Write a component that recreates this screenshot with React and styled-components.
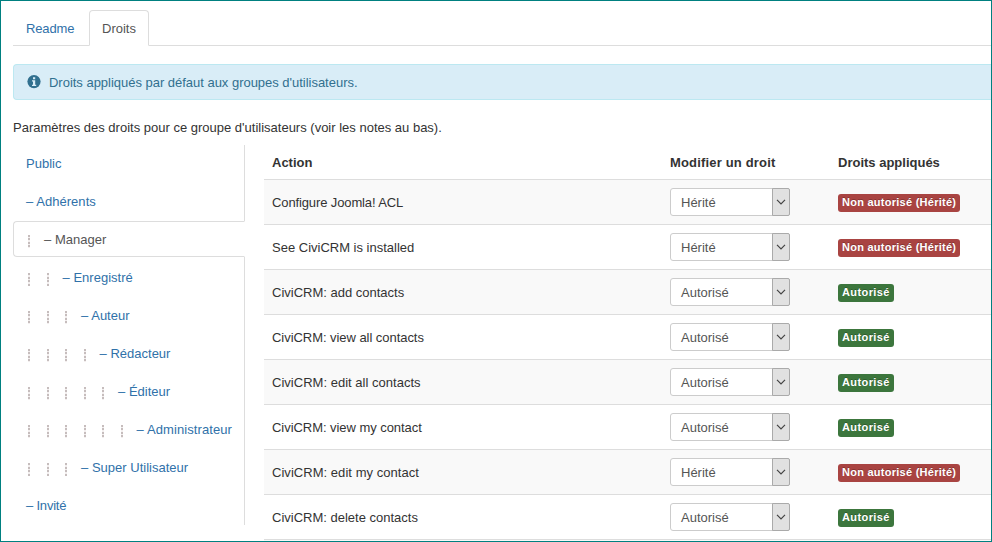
import React from "react";
import styled, { createGlobalStyle } from "styled-components";

const GlobalStyle = createGlobalStyle`
  * { box-sizing: border-box; }
  body {
    margin: 0;
    background: #fff;
    color: #333;
    font: 13px/18px "Liberation Sans", Arial, sans-serif;
  }
`;

const Page = styled.main`
  height: 542px;
  padding: 9px 0 0 12px;
  border: 1px solid #008080;
  overflow: hidden;
`;

const TabBar = styled.nav`
  display: flex;
  height: 36px;
  border-bottom: 1px solid #ddd;
`;

const Tab = styled.a`
  height: 36px;
  width: ${(p) => p.$width}px;
  padding: 9px 0 8px 12px;
  margin-right: 2px;
  border: 1px solid ${(p) => (p.$active ? "#ddd" : "transparent")};
  border-bottom-color: ${(p) => (p.$active ? "#fff" : "#ddd")};
  border-radius: 4px 4px 0 0;
  background: ${(p) => (p.$active ? "#fff" : "transparent")};
  color: ${(p) => (p.$active ? "#555" : "#3071a9")};
  letter-spacing: ${(p) => p.$spacing || 0}px;
  white-space: nowrap;
`;

const Notice = styled.div`
  display: flex;
  align-items: center;
  gap: 8px;
  height: 36px;
  margin-top: 18px;
  padding-left: 13px;
  border: 1px solid #bce8f1;
  border-right: 0;
  border-radius: 4px 0 0 4px;
  background: #d9edf7;
  color: #31708f;
`;

const Line = styled.span`
  padding-top: ${(p) => p.$drop || 0}px;
  letter-spacing: ${(p) => p.$spacing || 0}px;
  white-space: nowrap;
`;

const Intro = styled.p`
  margin: 19px 0 8px;
`;

const Columns = styled.div`
  display: flex;
  gap: 19px;
`;

const GroupList = styled.ul`
  display: flex;
  flex-direction: column;
  gap: 2px;
  flex: none;
  width: 232px;
  height: 380px;
  margin: 0;
  padding: 0;
  list-style: none;
  border-right: 1px solid #ddd;
`;

const Group = styled.li`
  display: flex;
  flex: none;
  height: 36px;
  margin-right: -1px;
  padding: 9px 0 0 12px;
  border: 1px solid ${(p) => (p.$active ? "#ddd" : "transparent")};
  border-right-color: ${(p) => (p.$active ? "#fff" : "transparent")};
  border-radius: 4px 0 0 4px;
  color: ${(p) => (p.$active ? "#555" : "#3071a9")};
  white-space: nowrap;
`;

const Guides = styled.span`
  display: flex;
  margin: 0 0.6px 0 -1px;
`;

/* Four 3px dashes, one per nesting level. */
const Guide = styled.span`
  flex: none;
  width: 18.5px;
  height: 13px;
  margin-top: 4px;
  padding-left: 3px;

  &::before {
    content: "";
    display: block;
    width: 2px;
    height: 13px;
    background: repeating-linear-gradient(#c6bdbd 0 2px, #f3efef 2px 3.5px);
  }
`;

const Table = styled.table`
  flex: 1;
  border-collapse: separate;
  border-spacing: 0;
  table-layout: fixed;
  width: 727px;
`;

const HeadCell = styled.th`
  width: ${(p) => p.$width};
  height: 34px;
  padding: 9px 8px 7px;
  text-align: left;
  font-weight: bold;
  letter-spacing: ${(p) => p.$spacing || 0}px;
`;

const Row = styled.tr`
  background: ${(p) => (p.$striped ? "#f9f9f9" : "#fff")};
`;

const Cell = styled.td`
  height: 45px;
  padding: 8px;
  border-top: 1px solid #ddd;
  vertical-align: top;
  line-height: ${(p) => (p.$tall ? "30px" : "18px")};
  ${(p) => p.$tall && "padding-bottom: 6px;"}
`;

const Select = styled.div`
  display: flex;
  justify-content: space-between;
  width: 120px;
  height: 28px;
  padding-left: 10px;
  border: 1px solid #ccc;
  border-radius: 3px;
  background: #fff;
  color: #555;
  line-height: 28px;
`;

const Arrow = styled.span`
  display: flex;
  align-items: center;
  justify-content: center;
  width: 18px;
  height: 28px;
  margin: -1px -1px 0 0;
  padding: 0 1px 1px 0;
  border: 1px solid #aaa;
  border-radius: 0 2px 2px 0;
  background: #e1e1e1;
`;

const Badge = styled.span`
  display: block;
  width: ${(p) => (p.$allowed ? 56 : 122)}px;
  height: 18px;
  margin-top: 6px;
  padding-left: 4px;
  border-radius: 3px;
  background: ${(p) => (p.$allowed ? "#3c763d" : "#a94442")};
  color: #fff;
  font-size: 11px;
  font-weight: bold;
  line-height: 16px;
  letter-spacing: ${(p) => (p.$allowed ? 0.4 : 0.26)}px;
  text-shadow: 0 -1px 0 rgba(0, 0, 0, 0.25);
  white-space: nowrap;
`;

const InfoIcon = () => (
  <svg width="14" height="14" viewBox="0 0 14 14">
    <circle cx="7" cy="6.6" r="6.6" fill="#31708f" />
    <path d="M6 2.2h2.2v2H6zM5 5.3h3.2v4.5h1V11H5V9.8h1V6.5H5z" fill="#d9edf7" />
  </svg>
);

const Chevron = () => (
  <svg width="10" height="6" viewBox="0 0 10 6">
    <path d="M1 0.8 5 4.8 9 0.8" fill="none" stroke="#444" strokeWidth="1.2" />
  </svg>
);

const groups = [
  { depth: 0, label: "Public" },
  { depth: 0, label: "– Adhérents", spacing: 0.04 },
  { depth: 1, label: "– Manager", active: true },
  { depth: 2, label: "– Enregistré" },
  { depth: 3, label: "– Auteur" },
  { depth: 4, label: "– Rédacteur" },
  { depth: 5, label: "– Éditeur" },
  { depth: 6, label: "– Administrateur", spacing: 0.09 },
  { depth: 3, label: "– Super Utilisateur" },
  { depth: 0, label: "– Invité", spacing: -0.2 },
];

const rules = [
  { action: "Configure Joomla! ACL", allowed: false, spacing: -0.12 },
  { action: "See CiviCRM is installed", allowed: false },
  { action: "CiviCRM: add contacts", allowed: true },
  { action: "CiviCRM: view all contacts", allowed: true, spacing: -0.05 },
  { action: "CiviCRM: edit all contacts", allowed: true, spacing: 0.02 },
  { action: "CiviCRM: view my contact", allowed: true, spacing: -0.05 },
  { action: "CiviCRM: edit my contact", allowed: false, spacing: 0.04 },
  { action: "CiviCRM: delete contacts", allowed: true },
  { action: "", allowed: null },
];

export default function App() {
  return (
    <>
      <GlobalStyle />
      <Page>
        <TabBar>
          <Tab $width={74} $spacing={-0.15}>Readme</Tab>
          <Tab $width={60} $active>Droits</Tab>
        </TabBar>
        <Notice>
          <InfoIcon />
          <Line $drop={1} $spacing={-0.02}>
            Droits appliqués par défaut aux groupes d'utilisateurs.
          </Line>
        </Notice>
        <Intro>
          <Line>Paramètres des droits pour ce groupe d'utilisateurs (voir les notes au bas).</Line>
        </Intro>
        <Columns>
          <GroupList>
            {groups.map((g) => (
              <Group key={g.label} $active={g.active}>
                {g.depth > 0 && (
                  <Guides>
                    {Array.from({ length: g.depth }, (_, i) => (
                      <Guide key={i} />
                    ))}
                  </Guides>
                )}
                <Line $spacing={g.spacing}>{g.label}</Line>
              </Group>
            ))}
          </GroupList>
          <Table>
            <thead>
              <tr>
                <HeadCell $width="398px">Action</HeadCell>
                <HeadCell $width="168px" $spacing={0.17}>Modifier un droit</HeadCell>
                <HeadCell $width="161px">Droits appliqués</HeadCell>
              </tr>
            </thead>
            <tbody>
              {rules.map((r, i) => (
                <Row key={i} $striped={i % 2 === 0}>
                  <Cell $tall>
                    <Line $spacing={r.spacing}>{r.action}</Line>
                  </Cell>
                  <Cell>
                    {r.action && (
                      <Select>
                        {r.allowed ? "Autorisé" : "Hérité"}
                        <Arrow>
                          <Chevron />
                        </Arrow>
                      </Select>
                    )}
                  </Cell>
                  <Cell>
                    {r.action && (
                      <Badge $allowed={r.allowed}>
                        {r.allowed ? "Autorisé" : "Non autorisé (Hérité)"}
                      </Badge>
                    )}
                  </Cell>
                </Row>
              ))}
            </tbody>
          </Table>
        </Columns>
      </Page>
    </>
  );
}
